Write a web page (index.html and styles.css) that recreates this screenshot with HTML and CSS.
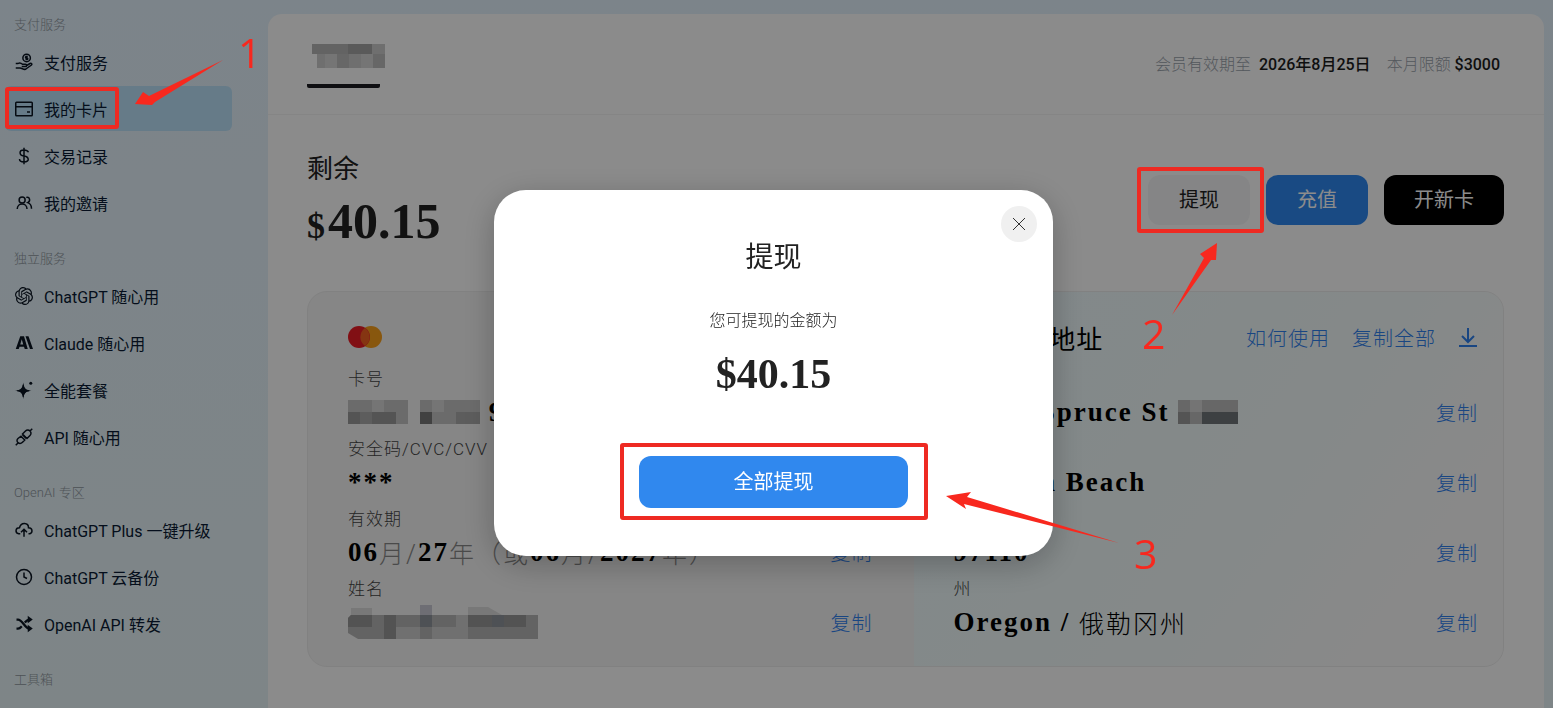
FILE: index.html
```html
<!DOCTYPE html>
<html lang="zh-CN">
<head>
    <meta charset="UTF-8">
    <meta name="viewport" content="width=device-width, initial-scale=1.0">
    <title>我的卡片</title>
    <link rel="stylesheet" href="styles.css">
</head>
<body>
    <div class="layout">
        <nav class="sidebar">
            <div class="nav-group">
                <h2>支付服务</h2>
                <a href="#"><svg viewBox="0 0 24 24"><circle cx="15.500" cy="6.500" r="5"/><path d="M17 4.500h-2a1 1 0 0 0 0 2h1a1 1 0 0 1 0 2h-2M15.500 3.500v6M1 14h3c3-2 5 0 6 1h4c2 0 2 3 0 3H9M15 17l5-3c2-1 3 1 2 2l-7 5c-1 1-3 1-5 0l-3-1H1"/></svg>支付服务</a>
                <a href="#" class="active"><svg viewBox="0 0 24 24"><rect x="1" y="3" width="22" height="18" rx="1"/><path d="M1 9h22M16 16h4"/></svg>我的卡片</a>
                <a href="#"><svg viewBox="0 0 24 24"><path d="M12 1v22M18 7c-1-2-3-3-6-3-7 0-7 7 0 8s8 8 0 8c-3 0-6-1-6-4"/></svg>交易记录</a>
                <a href="#"><svg viewBox="0 0 24 24"><circle cx="9.500" cy="8" r="4"/><path d="M3 20c0-9 13-9 13 0M15 4.500c5-1 6 5 2 7 3 1 5 4 5 8"/></svg>我的邀请</a>
            </div>
            <div class="nav-group">
                <h2>独立服务</h2>
                <a href="#"><svg class="fill" viewBox="0 0 24 24"><path d="M22.282 9.821a5.985 5.985 0 0 0-.516-4.911 6.046 6.046 0 0 0-6.510-2.900A6.065 6.065 0 0 0 4.981 4.182a5.985 5.985 0 0 0-3.998 2.900 6.046 6.046 0 0 0 .743 7.097 5.980 5.980 0 0 0 .511 4.911 6.051 6.051 0 0 0 6.515 2.900A5.985 5.985 0 0 0 13.260 24a6.056 6.056 0 0 0 5.772-4.206 5.990 5.990 0 0 0 3.998-2.900 6.056 6.056 0 0 0-.748-7.073zM13.260 22.430a4.476 4.476 0 0 1-2.876-1.041l.141-.080 4.779-2.758a.795.795 0 0 0 .393-.681v-6.737l2.020 1.169a.071.071 0 0 1 .038.052v5.583a4.504 4.504 0 0 1-4.495 4.493zM3.600 18.304a4.471 4.471 0 0 1-.535-3.014l.142.085 4.783 2.758a.771.771 0 0 0 .781 0l5.843-3.368v2.332a.080.080 0 0 1-.033.062L9.740 19.950a4.499 4.499 0 0 1-6.140-1.646zM2.341 7.896a4.485 4.485 0 0 1 2.365-1.973V11.600a.766.766 0 0 0 .388.677l5.814 3.354-2.020 1.169a.076.076 0 0 1-.071 0l-4.830-2.787A4.504 4.504 0 0 1 2.341 7.896zm16.596 3.856-5.833-3.388L15.119 7.200a.076.076 0 0 1 .071 0l4.830 2.791a4.494 4.494 0 0 1-.676 8.105v-5.678a.790.790 0 0 0-.407-.666zm2.011-3.024-.142-.085-4.774-2.782a.776.776 0 0 0-.785 0L9.409 9.230V6.897a.066.066 0 0 1 .028-.061l4.830-2.787a4.499 4.499 0 0 1 6.681 4.679zM8.307 12.863l-2.020-1.164a.080.080 0 0 1-.038-.057V6.074a4.499 4.499 0 0 1 7.376-3.453l-.142.080-4.778 2.758a.795.795 0 0 0-.393.681zm1.097-2.365L12.006 9l2.607 1.500v2.999L12.016 15l-2.607-1.500z"/></svg>ChatGPT 随心用</a>
                <a href="#"><svg class="fill" viewBox="0 0 24 24"><path fill-rule="evenodd" d="M1 20 7 3h5l5 17h-4l-1-3H6l-1 3zM7 14h4L9 7zM14 3h4l6 17h-4z"/></svg>Claude 随心用</a>
                <a href="#"><svg class="fill" viewBox="0 0 24 24"><path d="M11 2c1 8 3 10 11 11-8 1-10 3-11 11-1-8-3-10-11-11 8-1 10-3 11-11z"/><path d="M11 5c1 6 2 7 8 8-6 1-7 2-8 8-1-6-2-7-8-8 6-1 7-2 8-8z" stroke="#0a1422" stroke-width="1"/><circle cx="21" cy="3" r="2"/></svg>全能套餐</a>
                <a href="#"><svg viewBox="0 0 24 24"><path d="m10 9 5 5M4 20l-3 3M20 4l3-3M11 7l3-3c4-4 10 2 6 6l-4 4-6-6zM8 11l5 5-3 3c-4 4-10-1-6-5z"/></svg>API 随心用</a>
            </div>
            <div class="nav-group">
                <h2>OpenAI 专区</h2>
                <a href="#"><svg viewBox="0 0 24 24"><path d="M7 17H5c-5-1-5-8 1-8C8 1 18 2 18 9c6 0 6 8 1 8h-1M12 21V11M8 15l4-4 4 4"/></svg>ChatGPT Plus 一键升级</a>
                <a href="#"><svg viewBox="0 0 24 24"><circle cx="12" cy="12" r="10"/><path d="M12 6v6l4 2"/></svg>ChatGPT 云备份</a>
                <a href="#"><svg viewBox="0 0 24 24"><path stroke-width="3" d="M2 6h2c6 0 9 12 15 12M2 18h2c3 0 4-2 5-3M13 10c2-2 4-4 6-4"/><path fill="#0a1422" d="M18 3l4 3-4 3zM18 15l4 3-4 3z"/></svg>OpenAI API 转发</a>
            </div>
            <div class="nav-group">
                <h2>工具箱</h2>
            </div>
        </nav>

        <main class="main">
            <header class="main-header">
                <a href="#" class="tab" aria-label="卡片">
                    <svg class="mosaic" width="76" height="28" viewBox="0 0 76 28"><path fill="#cbcbcb" d="M0 2h73v24H5V12H0z"/><path fill="#b5b5b5" d="M0 2h60v10H0z"/><path fill="#a5a5a5" d="M36 2h24v10H36z"/><path fill="#d6d6d6" d="M13 12h12v14H13zM49 12h12v14H49z"/><path fill="#bcbcbc" d="M61 12h12v14H61zM25 12h12v14H25z"/></svg>
                </a>
                <div class="member">
                    <span>会员有效期至 <strong>2026年8月25日</strong></span>
                    <span>本月限额 <strong>$3000</strong></span>
                </div>
            </header>

            <section class="content">
                <div class="balance-row">
                    <div>
                        <div class="balance-label">剩余</div>
                        <div class="balance"><small>$</small>40.15</div>
                    </div>
                    <div class="actions">
                        <button type="button" class="btn btn-light">提现</button>
                        <button type="button" class="btn btn-blue">充值</button>
                        <button type="button" class="btn btn-black">开新卡</button>
                    </div>
                </div>

                <div class="card">
                    <div class="card-info">
                        <div class="card-top">
                            <svg width="34" height="22" viewBox="0 0 34 22"><circle cx="23" cy="11" r="11" fill="#f79e1b"/><circle cx="11" cy="11" r="11" fill="#eb1c26"/><path fill="#f26122" d="M17 2a11 11 0 0 1 0 18 11 11 0 0 1 0-18z"/></svg>
                        </div>
                        <div class="field">
                            <div class="label">卡号</div>
                            <div class="value"><svg class="mosaic" width="132" height="24" viewBox="0 0 132 24"><path fill="#c4c4c4" d="M0 0h60v24H0zM72 0h60v24H72z"/><path fill="#d5d5d5" d="M24 0h12v12H24zM84 0h12v12H84z"/><path fill="#999" d="M0 12h12v12H0zM24 12h24v12H24z"/><path fill="#aaa" d="M12 12h12v12H12zM108 12h24v12h-24z"/><path fill="#777" d="M72 12h12v12H72z"/></svg> 9918</div>
                        </div>
                        <div class="field">
                            <div class="label">安全码/CVC/CVV</div>
                            <div class="value">***</div>
                        </div>
                        <div class="field">
                            <div class="label">有效期</div>
                            <div class="value">06<i>月/</i>27<i>年（或</i>06<i>月/</i>2027<i>年）</i></div>
                            <a href="#">复制</a>
                        </div>
                        <div class="field">
                            <div class="label">姓名</div>
                            <div class="value"><svg class="mosaic" width="190" height="34" viewBox="0 0 190 34"><path fill="#b5b5b5" d="M3 10h187v24H10L0 28V13z"/><path fill="#dadada" d="M3 3h21v7H3zM120 2h20l14 8h-34z"/><path fill="#c9c9d4" d="M72 0h12v10H72z"/><path fill="#989898" d="M0 13l3-3h21v12H0zM36 10h12v24H36zM120 10h58v12h-58z"/><path fill="#8f949c" d="M72 10h12v12H72zM144 10h12v12h-12z"/><path fill="#cdcdcd" d="M48 22h24v12H48zM108 10h12v24h-12zM84 22h24v12H84z"/></svg></div>
                            <a href="#">复制</a>
                        </div>
                    </div>
                    <div class="card-address">
                        <div class="card-top">
                            <h3>US 账单地址</h3>
                            <div class="links">
                                <a href="#">如何使用</a>
                                <a href="#">复制全部</a>
                                <a href="#" aria-label="下载"><svg width="20" height="20" viewBox="0 0 20 20"><path d="M10 1v13M4 9l6 6 6-6M1 19h18"/></svg></a>
                            </div>
                        </div>
                        <div class="field">
                            <div class="label">街道</div>
                            <div class="value">12345 Spruce St <svg class="mosaic" width="60" height="24" viewBox="0 0 60 24"><path fill="#bcbcbc" d="M0 0h60v24H0z"/><path fill="#d4d4d4" d="M12 0h12v12H12z"/><path fill="#999" d="M0 12h12v12H0z"/><path fill="#707678" d="M24 12h36v12H24z"/></svg></div>
                            <a href="#">复制</a>
                        </div>
                        <div class="field">
                            <div class="label">城市</div>
                            <div class="value">Cannon Beach</div>
                            <a href="#">复制</a>
                        </div>
                        <div class="field">
                            <div class="label">邮编</div>
                            <div class="value">97110</div>
                            <a href="#">复制</a>
                        </div>
                        <div class="field">
                            <div class="label">州</div>
                            <div class="value">Oregon / <em>俄勒冈州</em></div>
                            <a href="#">复制</a>
                        </div>
                    </div>
                </div>
            </section>
        </main>
    </div>

    <div class="overlay">
        <div class="modal" role="dialog" aria-labelledby="modal-title">
            <button type="button" class="close" aria-label="关闭"><svg width="12" height="12" viewBox="0 0 12 12"><path d="M0 0l12 12M12 0 0 12"/></svg></button>
            <h2 id="modal-title">提现</h2>
            <p>您可提现的金额为</p>
            <div class="amount">$40.15</div>
            <button type="button" class="submit">全部提现</button>
        </div>
    </div>

    <!-- step markers -->
    <svg class="marks" width="1553" height="708" viewBox="0 0 1553 708">
        <g class="frame">
            <rect x="7" y="89" width="110" height="38" rx="1"/>
            <rect x="1139" y="169" width="123" height="62" rx="1"/>
            <rect x="622" y="445" width="304" height="73" rx="1"/>
        </g>
        <path d="M223 60 155 102 152 105 135 104 143 92 149 96z"/>
        <path d="M1172 315 1204 258 1200 254 1217 243 1216 260 1211 260z"/>
        <path d="M1119 543 964 504 966 509 946 496 971 492 967 497z"/>
        <text x="238" y="68">1</text>
        <text x="1142" y="349">2</text>
        <text x="1134" y="569">3</text>
    </svg>
</body>
</html>
```

FILE: styles.css
```css
* {
    box-sizing: border-box;
}
body {
    margin: 0;
    font-family: Roboto, "Noto Sans CJK SC", sans-serif;
    font-size: 16px;
    font-weight: 300;
    color: #222;
    background: linear-gradient(#e2f0fb, #e6f3f6);
    min-height: 100vh;
    overflow: hidden;
}
h2, h3, p {
    margin: 0;
    font-weight: 300;
}
a {
    color: #2f80ed;
    text-decoration: none;
}
button {
    font: inherit;
    border: none;
    cursor: pointer;
}
svg {
    flex: none;
}
.layout {
    display: flex;
    height: 100vh;
}

/* sidebar */
.sidebar {
    width: 268px;
    flex: none;
    padding: 13px 36px 0 5px;
    display: flex;
    flex-direction: column;
    gap: 22px;
}
.nav-group {
    display: flex;
    flex-direction: column;
    gap: 2px;
}
.nav-group h2 {
    font-size: 13px;
    line-height: 20px;
    padding: 2px 0 0 9px;
    margin-bottom: 2px;
    color: #8e979e;
}
.nav-group a {
    display: flex;
    align-items: center;
    gap: 11px;
    height: 45px;
    padding-left: 10px;
    border-radius: 6px;
    color: #0a1a33;
    font-weight: 400;
}
.nav-group a.active {
    background: #bbe1f7;
}
.nav-group svg {
    width: 18px;
    height: 18px;
    fill: none;
    stroke: #0a1422;
    stroke-width: 2;
}
.nav-group svg.fill {
    fill: #0a1422;
    stroke: none;
}

/* main panel */
.main {
    flex: 1;
    margin: 14px 9px 0 0;
    background: #fdfdfd;
    border-radius: 14px 14px 0 0;
}
.main-header {
    display: flex;
    justify-content: space-between;
    align-items: center;
    height: 101px;
    padding: 0 44px 0 39px;
    border-bottom: 1px solid #f2f2f2;
}
.tab {
    width: 73px;
    height: 48px;
    padding: 2px 0 0 5px;
    border-bottom: 4px solid #1c1c22;
    border-radius: 2px;
}
.member {
    display: flex;
    gap: 16px;
    padding-bottom: 3px;
    color: #99a1aa;
}
.member strong {
    font-weight: 500;
    color: #1c1c1c;
    padding-left: 4px;
}
.member span + span strong {
    padding-left: 0;
}
.content {
    padding: 33px 40px 0 39px;
}
.balance-row {
    display: flex;
    justify-content: space-between;
    height: 143px;
}
.balance-label {
    font-size: 26px;
    font-weight: 400;
    line-height: 42px;
}
.balance {
    font-family: "Liberation Serif", serif;
    font-size: 50px;
    font-weight: 700;
    line-height: 62px;
}
.balance small {
    font-size: 36px;
    padding-right: 3px;
}
.actions {
    display: flex;
    gap: 16px;
    padding-top: 27px;
}
.btn {
    width: 102px;
    height: 50px;
    padding: 0 0 3px;
    border-radius: 12px;
    font-size: 20px;
    font-weight: 400;
}
.btn-light {
    background: #f3f3f4;
    color: #222;
}
.btn-blue {
    background: #2f88ee;
    color: #fff;
}
.btn-black {
    width: 120px;
    background: #000;
    color: #fff;
}

/* card */
.card {
    display: flex;
    height: 376px;
    border: 1px solid #ececec;
    border-radius: 20px;
    overflow: hidden;
    background: #f4f4f4;
}
.card-info,
.card-address {
    flex: 1;
    padding: 22px 41px 0 40px;
}
.card-address {
    padding-right: 25px;
    background: linear-gradient(125deg, #ebf8fc, #f3faf9 60%, #fafafa 85%);
}
.card-top {
    display: flex;
    align-items: center;
    justify-content: space-between;
    height: 46px;
    margin-bottom: 4px;
}
.card-top h3 {
    font-size: 26px;
    font-weight: 400;
    letter-spacing: 1px;
    color: #000;
}
.links {
    display: flex;
    align-items: center;
    gap: 22px;
}
.links svg {
    display: block;
    fill: none;
    stroke: #2f80ed;
    stroke-width: 2;
}
.links a,
.field a {
    font-size: 20px;
    letter-spacing: 1px;
}
.field {
    display: grid;
    grid-template-columns: 1fr auto;
    grid-template-rows: 26px 44px;
    align-items: center;
}
.label {
    grid-column: 1 / 3;
    font-size: 17px;
    letter-spacing: 1px;
    color: #444;
}
.value {
    display: flex;
    align-items: center;
    height: 36px;
    font-family: "Liberation Serif", "Noto Sans CJK SC", serif;
    font-size: 27px;
    font-weight: 700;
    letter-spacing: 2px;
    white-space: pre;
    color: #000;
}
.value i,
.value em {
    font-family: Roboto, "Noto Sans CJK SC", sans-serif;
    font-size: 25px;
    font-style: normal;
    font-weight: 300;
}
.value i {
    color: #888;
}

/* withdraw dialog */
.overlay {
    position: fixed;
    inset: 0;
    display: flex;
    align-items: center;
    justify-content: center;
    padding: 38px 6px 0 0;
    background: rgba(0, 0, 0, 0.45);
}
.modal {
    position: relative;
    display: flex;
    flex-direction: column;
    align-items: center;
    width: 559px;
    padding: 46px 0 48px;
    background: #fff;
    border-radius: 32px;
    box-shadow: 0 8px 32px rgba(0, 0, 0, 0.25);
}
.modal h2 {
    font-size: 28px;
    font-weight: 400;
    line-height: 44px;
}
.modal p {
    margin-top: 29px;
    line-height: 24px;
}
.amount {
    margin: 13px 0 54px;
    font-family: "Liberation Serif", serif;
    font-size: 42px;
    font-weight: 700;
    line-height: 56px;
}
.submit {
    width: 269px;
    height: 52px;
    padding: 0 0 3px;
    border-radius: 12px;
    background: #3088ee;
    color: #fff;
    font-size: 20px;
    font-weight: 400;
}
.close {
    position: absolute;
    top: 16px;
    right: 16px;
    display: flex;
    align-items: center;
    justify-content: center;
    width: 36px;
    height: 36px;
    border-radius: 50%;
    background: #f0f0f0;
}
.close svg {
    fill: none;
    stroke: #333;
    stroke-width: 1;
}

.marks {
    position: absolute;
    top: 0;
    left: 0;
    pointer-events: none;
    fill: #f8281e;
    font-family: "Open Sans", sans-serif;
    font-size: 41px;
    font-weight: 400;
}
.frame {
    fill: none;
    stroke: #ee2a22;
    stroke-width: 4;
}
```
